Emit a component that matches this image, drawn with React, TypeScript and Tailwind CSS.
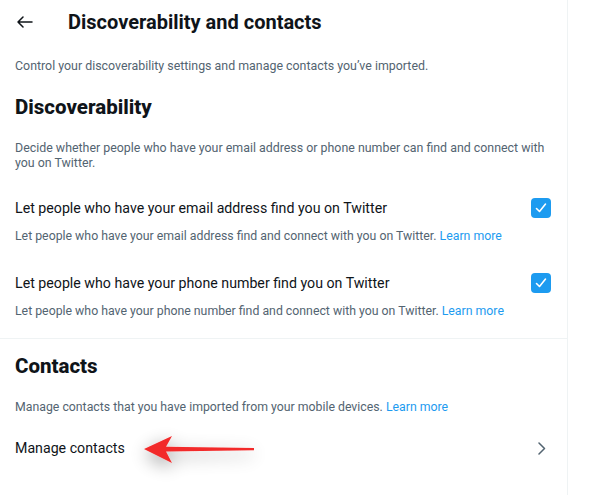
import React from "react";

function Check() {
  return (
    <div className="w-5 h-5 rounded-[4px] bg-[#1d9bf0] flex items-center justify-center shrink-0">
      <svg viewBox="0 0 20 20" className="w-5 h-5" fill="none" stroke="white" strokeWidth="1.6" strokeLinecap="round" strokeLinejoin="round">
        <path d="M5.5 10.5l3 3L14.5 6" />
      </svg>
    </div>
  );
}

export default function App() {
  return (
    <div className="w-[600px] h-[495px] bg-white overflow-hidden flex" style={{ fontFamily: 'Roboto, "Liberation Sans", sans-serif' }}>
      <div className="w-[568px] border-r border-[#eff3f4] flex flex-col relative">
        <div className="h-[44px] flex items-center pl-[17px]">
          <svg viewBox="0 0 16 12" className="w-[16px] h-[12px] text-[#0f1419]" fill="none" stroke="currentColor" strokeWidth="1.5" strokeLinecap="round" strokeLinejoin="round">
            <path d="M1 6h14M6 1L1 6l5 5" />
          </svg>
          <div className="ml-[35px] text-[20px] font-bold text-[#0f1419] leading-6">Discoverability and contacts</div>
        </div>
        <div className="h-[44px] flex items-center px-[15px] text-[12.4px] text-[#536471]">
          Control your discoverability settings and manage contacts you’ve imported.
        </div>
        <div className="h-[38px] flex items-center px-[15px] text-[20.5px] font-extrabold text-[#0f1419]">Discoverability</div>
        <div className="pl-[15px] pr-[15px] pt-[14px] pb-[8px] text-[12.4px] text-[#536471] leading-[15px]">
          Decide whether people who have your email address or phone number can find and connect with you on Twitter.
        </div>
        <div className="px-[15px] pt-[20px] pb-[14px]">
          <div className="flex items-center justify-between">
            <div className="text-[14.2px] text-[#0f1419] leading-5">Let people who have your email address find you on Twitter</div>
            <div className="mr-[1px]"><Check /></div>
          </div>
          <div className="mt-[10px] text-[12.3px] text-[#536471] leading-4">
            Let people who have your email address find and connect with you on Twitter. <span className="text-[#1d9bf0]">Learn more</span>
          </div>
        </div>
        <div className="px-[15px] pt-[15px] pb-[19px] border-b border-[#eff3f4]">
          <div className="flex items-center justify-between">
            <div className="text-[14.2px] text-[#0f1419] leading-5">Let people who have your phone number find you on Twitter</div>
            <div className="mr-[1px]"><Check /></div>
          </div>
          <div className="mt-[10px] text-[12.3px] text-[#536471] leading-4">
            Let people who have your phone number find and connect with you on Twitter. <span className="text-[#1d9bf0]">Learn more</span>
          </div>
        </div>
        <div className="px-[15px] pt-[15px] text-[20.5px] font-extrabold text-[#0f1419] leading-6">Contacts</div>
        <div className="px-[15px] pt-[21px] text-[12.3px] text-[#536471] leading-4">
          Manage contacts that you have imported from your mobile devices. <span className="text-[#1d9bf0]">Learn more</span>
        </div>
        <div className="px-[15px] pt-[23px] flex items-center justify-between">
          <div className="text-[14.2px] text-[#0f1419] leading-5">Manage contacts</div>
          <svg viewBox="0 0 8 13" className="w-[8px] h-[13px] mr-[6px] text-[#536471]" fill="none" stroke="currentColor" strokeWidth="1.5" strokeLinecap="round" strokeLinejoin="round">
            <path d="M1 1l5.5 5.5L1 12" />
          </svg>
        </div>
        <svg className="absolute left-[104px] top-[399px] w-[190px] h-[96px]" viewBox="104 399 190 96">
          <defs>
            <filter id="sh" x="-30%" y="-120%" width="160%" height="340%">
              <feGaussianBlur in="SourceAlpha" stdDeviation="9" />
              <feOffset dx="0" dy="5" result="b" />
              <feComponentTransfer><feFuncA type="linear" slope="0.4" /></feComponentTransfer>
              <feMerge><feMergeNode /><feMergeNode in="SourceGraphic" /></feMerge>
            </filter>
          </defs>
          <path filter="url(#sh)" fill="#f22a2a" d="M144 449 L172 436 L166 446.8 L254 448 L254 450.2 L166 451.5 L172 463 Z" />
        </svg>
      </div>
    </div>
  );
}
